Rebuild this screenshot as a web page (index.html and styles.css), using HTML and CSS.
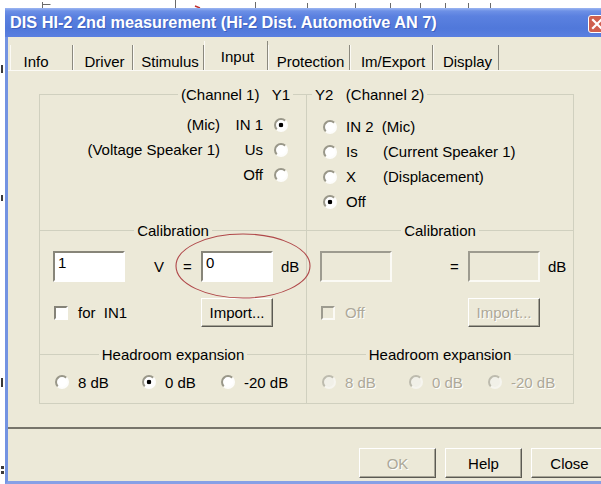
FILE: index.html
```html
<!DOCTYPE html>
<html lang="en">
<head>
<meta charset="utf-8">
<title>DIS HI-2 2nd measurement</title>
<link rel="stylesheet" href="styles.css">
</head>
<body>
<svg class="ruler" width="601" height="8" viewBox="0 0 601 8">
  <g stroke="#6b6b6b" stroke-width="1" fill="none">
    <path d="M42.5 2v6M42.5 4.5h8"/>
    <path d="M175.5 0v8M255.5 2v6M307.5 3v5M355.5 3v5M390.5 3v5M420.5 3v5M445.5 3v5M468.5 3v5M490.5 3v5"/>
  </g>
  <path d="M195 6l5 2" stroke="#c03030" stroke-width="1.5"/>
</svg>
<div class="desk">
  <svg class="edge" width="5" height="476" viewBox="0 0 5 476">
    <g fill="#3a3a3a">
      <rect x="1" y="57" width="2" height="8"/>
      <rect x="1" y="187" width="2" height="6"/>
      <rect x="1" y="370" width="2" height="9"/>
      <rect x="1" y="458" width="3" height="3"/>
      <rect x="1" y="463" width="3" height="3"/>
    </g>
  </svg>
  <div class="window">
    <div class="titlebar">
      <span class="title">DIS HI-2 2nd measurement (Hi-2 Dist. Automotive AN 7)</span>
      <span class="close"><svg width="12" height="12" viewBox="0 0 12 12"><path d="M2 2l8 8M10 2l-8 8" stroke="#fff" stroke-width="2.2" stroke-linecap="square"/></svg></span>
    </div>
    <div class="dialog">
      <div class="tabs">
        <div class="tab">Info</div>
        <div class="tab">Driver</div>
        <div class="tab">Stimulus</div>
        <div class="tab on">Input</div>
        <div class="tab">Protection</div>
        <div class="tab">Im/Export</div>
        <div class="tab">Display</div>
      </div>
      <div class="panel">
        <div class="frame">
          <!-- channel selection -->
          <div class="cell left">
            <div class="cap end">(Channel 1)&nbsp;&nbsp; Y1</div>
            <div class="src-left">
              <span class="desc">(Mic)</span><span class="lbl">IN 1</span><span class="radio on"></span>
              <span class="desc">(Voltage Speaker 1)</span><span class="lbl">Us</span><span class="radio"></span>
              <span class="desc"></span><span class="lbl">Off</span><span class="radio"></span>
            </div>
          </div>
          <div class="cell">
            <div class="cap start">Y2&nbsp;&nbsp; (Channel 2)</div>
            <div class="src-right">
              <span class="radio"></span><span class="lbl wide">IN 2&nbsp; (Mic)</span>
              <span class="radio"></span><span class="lbl">Is</span><span class="desc">(Current Speaker 1)</span>
              <span class="radio"></span><span class="lbl">X</span><span class="desc">(Displacement)</span>
              <span class="radio on"></span><span class="lbl wide">Off</span>
            </div>
          </div>

          <!-- calibration -->
          <div class="cell left top">
            <div class="cap">Calibration</div>
            <div class="calib">
              <input class="field" type="text" value="1">
              <span class="mid"><span class="unit">V</span><span>=</span></span>
              <input class="field" type="text" value="0">
              <span class="db">dB</span>
              <label class="check"><span class="box"></span>for&nbsp; IN1</label>
              <button class="btn" type="button">Import...</button>
            </div>
          </div>
          <div class="cell top">
            <div class="cap">Calibration</div>
            <div class="calib">
              <input class="field" type="text" value="" disabled>
              <span class="mid"><span class="unit"></span><span>=</span></span>
              <input class="field" type="text" value="" disabled>
              <span class="db">dB</span>
              <label class="check off"><span class="box"></span>Off</label>
              <button class="btn" type="button" disabled>Import...</button>
            </div>
          </div>

          <!-- headroom -->
          <div class="cell left top">
            <div class="cap">Headroom expansion</div>
            <div class="opts">
              <span class="opt"><span class="radio"></span>8 dB</span>
              <span class="opt"><span class="radio on"></span>0 dB</span>
              <span class="opt"><span class="radio"></span>-20 dB</span>
            </div>
          </div>
          <div class="cell top">
            <div class="cap">Headroom expansion</div>
            <div class="opts off">
              <span class="opt"><span class="radio"></span>8 dB</span>
              <span class="opt"><span class="radio"></span>0 dB</span>
              <span class="opt"><span class="radio"></span>-20 dB</span>
            </div>
          </div>

          <svg class="mark" width="136" height="66" viewBox="0 0 136 66">
            <ellipse cx="68" cy="33" rx="67" ry="32" fill="none" stroke="#b0484a" stroke-width="1.1"/>
          </svg>
        </div>
      </div>
      <div class="actions">
        <button class="btn wide" type="button" disabled>OK</button>
        <button class="btn wide" type="button">Help</button>
        <button class="btn wide" type="button">Close</button>
      </div>
    </div>
  </div>
</div>
</body>
</html>
```

FILE: styles.css
```css
* { box-sizing: border-box; }

html, body { margin: 0; padding: 0; }

body {
  width: 601px;
  height: 484px;
  overflow: hidden;
  background: #fff;
  font-family: "Liberation Sans", Arial, sans-serif;
  font-size: 15px;
  line-height: 17px;
  color: #000;
}

.ruler { display: block; }

.desk { display: flex; height: 476px; }
.edge { display: block; flex: none; }

.window {
  flex: none;
  width: 607px;
  display: flex;
  flex-direction: column;
}

/* caption bar */
.titlebar {
  flex: none;
  height: 29px;
  display: flex;
  align-items: center;
  padding-left: 5px;
  background: linear-gradient(#9cb6f1 0, #6d90e6 3px, #5b81e0 8px, #5078da 70%, #5a7fe0 100%);
}
.title {
  color: #fff;
  font-weight: bold;
  font-size: 16.3px;
  white-space: nowrap;
  text-shadow: 1px 1px 0 #3d60bf;
}
.close {
  flex: none;
  width: 18px;
  height: 18px;
  margin: 3px 6px 0 auto;
  border: 1px solid #fff;
  border-radius: 3px;
  background: #cf5f4e;
  display: flex;
  align-items: center;
  justify-content: center;
}

.dialog {
  flex: 1;
  display: flex;
  flex-direction: column;
  background: #ece9d8;
  border-left: 3px solid #7393e2;
  border-bottom: 3px solid #86a0e6;
}

/* tab strip */
.tabs {
  flex: none;
  height: 33px;
  display: grid;
  grid-template-columns: 63px 60px 71px 64px 82px 83px 66px;
  align-items: end;
  padding-left: 2px;
}
.tab {
  height: 25px;
  padding: 8px 0 0 3px;
  text-align: center;
  white-space: nowrap;
  border-left: 1px solid #fbfaf5;
  border-right: 1px solid #8b897e;
}
.tab:first-child { padding-right: 14px; }
.tab.on { height: 29px; padding-top: 7px; }

.panel {
  flex: none;
  height: 359px;
  padding: 23px 0 0 31px;
  border-top: 1px solid #fbfaf5;
  border-bottom: 2px solid #77756b;
}

/* grouped frame */
.frame {
  position: relative;
  width: 535px;
  display: grid;
  grid-template-columns: 267px 266px;
  grid-template-rows: 135px 124px 49px;
  border: 1px solid #d0d0bf;
}
.cell { min-width: 0; }
.cell.left { border-right: 1px solid #d0d0bf; }
.cell.top { border-top: 1px solid #d0d0bf; }

.cap {
  display: table;
  margin: -9px auto 0;
  padding: 0 3px;
  background: #ece9d8;
  line-height: 17px;
  white-space: nowrap;
}
.cap.end { margin-left: auto; margin-right: 13px; }
.cap.start { margin-left: 5px; margin-right: 0; }

.src-left {
  display: grid;
  grid-template-columns: auto 47px 14px;
  grid-auto-rows: 25px;
  align-items: center;
  justify-content: end;
  padding-right: 18px;
  margin-top: 9px;
  white-space: nowrap;
}
.src-left .desc { text-align: right; padding-right: 7px; }
.src-left .lbl { text-align: right; padding-right: 11px; }

.src-right {
  display: grid;
  grid-template-columns: 14px 46px auto;
  grid-auto-rows: 25px;
  align-items: center;
  padding-left: 16px;
  margin-top: 11px;
  white-space: nowrap;
}
.src-right .lbl { padding-left: 9px; }
.src-right .lbl.wide { grid-column: span 2; }

/* radio buttons and check boxes */
.radio {
  flex: none;
  width: 14px;
  height: 14px;
  border-radius: 50%;
  border: 2px solid;
  border-color: #999789 #fdfdfb #fdfdfb #999789;
  background: #fff;
}
.radio.on { background: radial-gradient(circle, #000 0 2px, #fff 2.6px); }
.off .radio {
  border-color: #bdbbae #f6f5ef #f6f5ef #bdbbae;
  background: #f1f0e8;
}

.box {
  flex: none;
  width: 14px;
  height: 14px;
  margin-right: 10px;
  border: 2px solid;
  border-color: #858378 #fff #fff #858378;
  background: #fff;
}
.check.off { color: #aca899; text-shadow: 1px 1px 0 #fff; }
.check.off .box { background: #ece9d8; border-color: #9d9b8f #fbfaf5 #fbfaf5 #9d9b8f; }

/* calibration rows */
.calib {
  display: grid;
  grid-template-columns: 72px 76px 72px auto;
  grid-template-rows: 31px 29px;
  row-gap: 16px;
  align-items: center;
  padding-left: 13px;
  margin-top: 12px;
}
.field {
  width: 72px;
  height: 31px;
  margin: 0;
  padding: 0 0 8px 3px;
  border: 2px solid;
  border-color: #878579 #fff #fff #878579;
  background: #fff;
  font: inherit;
  color: #000;
  outline: none;
}
.field:disabled { background: #ece9d8; border-color: #9d9b8f #fbfaf5 #fbfaf5 #9d9b8f; }
.mid { display: flex; padding-left: 29px; }
.unit { width: 29px; }
.db { padding-left: 8px; }
.check {
  grid-column: 1 / 3;
  display: flex;
  align-items: center;
  padding-left: 1px;
  white-space: nowrap;
}

/* push buttons */
.btn {
  display: flex;
  align-items: center;
  justify-content: center;
  width: 72px;
  height: 29px;
  margin: 0;
  padding: 0;
  background: #ece9d8;
  border: 1px solid;
  border-color: #fff #5b5a53 #5b5a53 #fff;
  box-shadow: inset -1px -1px 0 #a7a597;
  font: inherit;
  color: #000;
}
.btn:disabled { color: #aca899; text-shadow: 1px 1px 0 #fff; }

/* headroom options */
.opts {
  display: grid;
  grid-template-columns: 87px 79px auto;
  height: 20px;
  align-items: center;
  padding-left: 15px;
  margin-top: 9px;
}
.opt { display: flex; align-items: center; white-space: nowrap; }
.opt .radio { margin-right: 9px; }
.opts.off .opt { color: #aca899; text-shadow: 1px 1px 0 #fff; }

/* hand-drawn ring over the dB field */
.mark {
  position: absolute;
  left: 135px;
  top: 138px;
  pointer-events: none;
}

.actions {
  display: flex;
  justify-content: flex-end;
  gap: 9px;
  padding-right: 4px;
  margin-top: 19px;
}
.btn.wide { width: 77px; height: 30px; }
```
